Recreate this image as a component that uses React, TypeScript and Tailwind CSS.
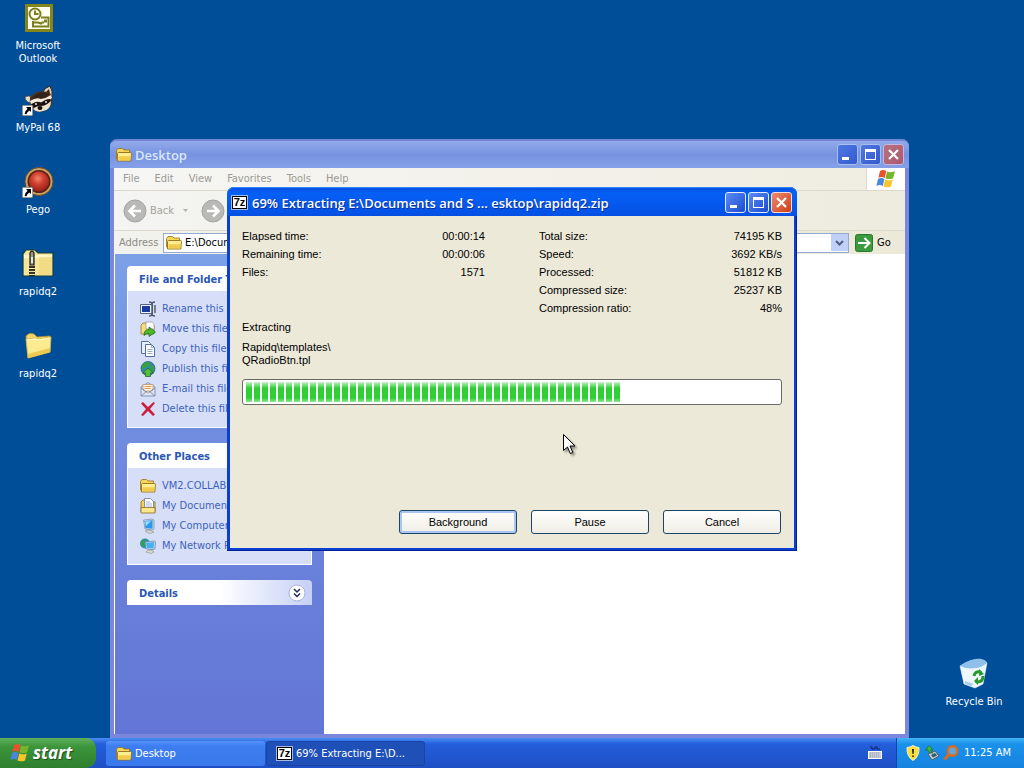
import React from 'react';
import clsx from 'clsx';

const PROGRESS_BLOCKS = 47;

const MENUS = ['File', 'Edit', 'View', 'Favorites', 'Tools', 'Help'];

interface IconProps {
  className?: string;
}

/* ---------- Icons ---------- */

const FolderIcon: React.FC<IconProps> = ({ className = 'w-4 h-4' }) => (
  <svg viewBox="0 0 16 16" className={clsx('shrink-0', className)} aria-hidden="true">
    <path d="M.5 12V3.500L2 1.500h4.500L8 3h5.500v3H3.500L1.600 13Z" fill="#f6d659" stroke="#94701a" strokeWidth=".8" />
    <path d="M1.500 14V6.500q0-1 1-1h12q1 0 1 1l-.7 7.500Z" fill="#fdee90" stroke="#94701a" strokeWidth=".9" />
    <path d="M2.500 13.200h11.500l.5-4H2.500Z" fill="#f3cb4a" />
  </svg>
);

const SevenZipIcon: React.FC = () => (
  <span
    className="flex h-[13px] w-[15px] shrink-0 items-center justify-center border border-black bg-white font-['Liberation_Sans'] text-[11px] leading-none font-bold text-black outline-1 outline-white/60"
    aria-hidden="true"
  >
    7z
  </span>
);

const WindowsFlag: React.FC<IconProps> = ({ className }) => (
  <svg viewBox="0 0 20 18" className={clsx('shrink-0', className)} aria-hidden="true">
    <path d="M4 1q3-2 6.300 0L8.700 8q-3-2-6.300-.2Z" fill="#e8532c" />
    <path d="M11 1.600q3 1.600 8-.4l-1.900 7q-3.500 1.700-7.700.2Z" fill="#79b52c" />
    <path d="M2 9q3-1.900 6.400 0L6.800 16q-3-1.900-6.400-.1Z" fill="#4a86e0" />
    <path d="M9.200 9.600q3.500 1.600 7.600-.2L15 16.400q-3.500 1.700-7.500.2Z" fill="#f7c52d" />
  </svg>
);

const ShortcutArrow: React.FC = () => (
  <svg viewBox="0 0 11 11" className="absolute bottom-0 left-0 h-[11px] w-[11px]" aria-hidden="true">
    <path d="M0 0h11v11H0Z" fill="#fff" stroke="#333" />
    <path d="M4 2h5v5L7.400 5.500Q5 7 4.500 9.200L2.600 9Q2.600 6 5.600 3.700Z" fill="#000" />
  </svg>
);

const OutlookIcon: React.FC = () => (
  <svg viewBox="0 0 32 32" className="h-8 w-8" aria-hidden="true">
    <path d="M3 2h28v28H3Z" fill="#85861a" />
    <path d="M6 5h22v22H6Z" fill="#fffef0" />
    <g fill="none" stroke="#7c7d1c" strokeWidth="2">
      <circle cx="13" cy="12" r="5.500" />
      <path d="M13 8.500V12h3.500M19 15.500h7.500v9H11V19M12 20.500h4l3 1 1-1h2" />
    </g>
    <path d="M22 17.500h3v3h-3Z" fill="#7c7d1c" />
  </svg>
);

const RaccoonIcon: React.FC = () => (
  <svg viewBox="0 0 32 32" className="h-8 w-8" aria-hidden="true">
    <path d="M21 8q1-4 7-6 3 5 2 11Z" fill="#e3d3b8" stroke="#2a1c14" strokeWidth="1" />
    <path d="m24 8 3-3 1 5Z" fill="#30221a" />
    <path d="M3 13q3-2 8 0l-2 6q-6-1-6-6Z" fill="#e9dfcd" stroke="#54463b" strokeWidth=".8" />
    <path d="M8 13Q16 4 28 9q4 6 2 12-6 8-14 7Q6 24 8 13Z" fill="#4b3327" />
    <path d="M10 14Q18 5 28 10q-5 4-10 5-4 3-8 2Z" fill="#33221a" />
    <path d="M8 17q6-4 11-2 6-1 10-4l1 3q-5 4-9 4-6 0-12 2Z" fill="#f4ead7" />
    <path d="M10 20q5-4 9-1 4-4 9-4 1 3-4 6-3 2-6 0-4 3-8 2Z" fill="#1a1310" />
    <path d="M29 17q0 9-8 10-6 2-10-2 3-3 8-3 5 0 10-5Z" fill="#eee3ce" />
    <ellipse cx="18" cy="24" rx="2.500" ry="2" fill="#120e0d" />
    <circle cx="14" cy="20" r=".9" fill="#fff" />
    <circle cx="24" cy="18" r=".9" fill="#fff" />
  </svg>
);

const PegoIcon: React.FC = () => (
  <svg viewBox="0 0 32 32" className="h-8 w-8" aria-hidden="true">
    <defs>
      <radialGradient id="pego-ball" cx=".45" cy=".35" r=".65">
        <stop offset="0" stopColor="#f58468" />
        <stop offset=".45" stopColor="#d04030" />
        <stop offset="1" stopColor="#98201a" />
      </radialGradient>
    </defs>
    <circle cx="17" cy="15.500" r="14" fill="#c8a266" stroke="#6b4a22" />
    <circle cx="17" cy="15.500" r="11.500" fill="#5c2014" />
    <circle cx="17" cy="15.500" r="10" fill="url(#pego-ball)" />
  </svg>
);

const ZipFolderIcon: React.FC = () => (
  <svg viewBox="0 0 32 32" className="h-8 w-8" aria-hidden="true">
    <path d="M1 28V6l3-4h9l3 3h15v23Z" fill="#f6e69c" stroke="#123c3a" strokeWidth="1.200" />
    <path d="M2 7h28v3H2Z" fill="#fff7c6" />
    <path d="M17 9h13v18H17Z" fill="#efd67c" opacity=".7" />
    <path d="M8 5q2-4 4 0v12H8Z" fill="#9d9c8c" stroke="#171717" strokeWidth="1.200" />
    <path d="M10 9v6" stroke="#fff" strokeWidth="1.500" />
    <path d="M8 18v10M12 18v10M10 18v10" stroke="#161616" strokeWidth="1.700" strokeDasharray="2 1" />
  </svg>
);

const BigFolderIcon: React.FC = () => (
  <svg viewBox="0 0 32 32" className="h-8 w-8" aria-hidden="true">
    <path d="M4 6q3-4 8-2l3 3 13-1v16L6 28Z" fill="#f3d468" stroke="#b18c29" strokeWidth=".8" />
    <path d="m4 9 9-1 3 1 13-2-1 15-22 6Z" fill="#fceb90" stroke="#d6b449" strokeWidth=".8" />
    <path d="m6 24 22-6v4L6 28Z" fill="#ecc950" />
    <path d="m5 10 8-1 3 1 12-2" fill="none" stroke="#fffbd2" strokeWidth="1.200" />
  </svg>
);

const RecycleBinIcon: React.FC = () => (
  <svg viewBox="0 0 32 32" className="h-8 w-8" aria-hidden="true">
    <path d="M2 8Q12 1 22 1q6 1 7 4l-4 21-8 4-11-4Z" fill="#dcebf5" stroke="#86b6de" strokeWidth=".8" />
    <path d="M2 8Q12 1 22 1q6 1 7 4-5 5-13 5Q8 11 2 8Z" fill="#8fc0ec" />
    <path d="M2 8q8 4 14 3 8-1 13-6l-4 21-8 4-11-4Z" fill="#f4f9ff" opacity=".8" />
    <path d="m7 23 9 3-3 2-6-2Z" fill="#abd0ed" />
    <path d="M16 18q1-5 6-4l1 1M25 18q0 6-6 6l-1-1" fill="none" stroke="#27992b" strokeWidth="3" />
    <path d="m21 11 5 5-5 2ZM20 19v8l-4-4Z" fill="#27992b" />
  </svg>
);

const TaskIcon: React.FC<{ kind: string }> = ({ kind }) => {
  if (kind === 'folder') return <FolderIcon />;
  return (
    <svg viewBox="0 0 16 16" className="h-4 w-4 shrink-0" aria-hidden="true">
      {kind === 'rename' && (
        <>
          <path d="M.5 3.500h12v9H.5Z" fill="#f2f5ff" stroke="#51608d" />
          <path d="M2 5h8v6H2Z" fill="#183c9e" />
          <path d="M9 1q3 0 3 2v10q0 2-3 2M15 1q-3 0-3 2M15 15q-3 0-3-2M15 4v8" fill="none" stroke="#4d536b" strokeWidth="1.400" />
        </>
      )}
      {kind === 'move' && (
        <>
          <path d="M1 13V4l2-2h4l1 2h6v9Z" fill="#f7dc7a" stroke="#93793a" strokeWidth=".8" />
          <path d="M6 1h6l2 2v5H6Z" fill="#fff" stroke="#888" strokeWidth=".6" />
          <path d="M4 14.500q0-6 5-6V6l6.500 5L9 15.500v-3q-3 0-5 2Z" fill="#4fb82b" stroke="#206c1c" strokeWidth=".8" />
        </>
      )}
      {kind === 'copy' && (
        <>
          <path d="M1.500.5h7l2 2v10h-9Z" fill="#e7eefc" stroke="#53709c" />
          <path d="M5.500 3.500h6l3 3v9h-9Z" fill="#fff" stroke="#53709c" />
          <path d="M11.500 3.500v3h3M7.500 8.500h5M7.500 10.500h5M7.500 12.500h5" fill="none" stroke="#7795bc" strokeWidth=".8" />
        </>
      )}
      {kind === 'publish' && (
        <>
          <circle cx="8" cy="7.500" r="7" fill="#3285c7" stroke="#20547b" strokeWidth=".7" />
          <path d="M2 4q3-4 7-3l2 2-3 3-4 1-2 3ZM11 4l3 1 .5 4-3 2-2-3Z" fill="#36a044" />
          <path d="m8 7 5.500 5h-3v3.500h-5V12h-3Z" fill="#57bd38" stroke="#1e6926" strokeWidth=".8" />
        </>
      )}
      {kind === 'email' && (
        <>
          <path d="m1 6 7-4.500L15 6v9H1Z" fill="#dbe5f5" stroke="#7283a1" strokeWidth=".8" />
          <path d="M3 3.500h10V9l-5 3-5-3Z" fill="#fff4df" stroke="#b28a60" strokeWidth=".7" />
          <path d="M4.500 5.500h7M4.500 7.500h6" stroke="#e39a4f" />
          <path d="m1 15 6-5h2l6 5M1 7l6 4M15 7l-6 4" fill="none" stroke="#7283a1" strokeWidth=".8" />
        </>
      )}
      {kind === 'delete' && (
        <path d="M1 2.500 3 1l5 5 5.500-5 1.500 1L10 8l5 5.500-2 1.500-5-5-5 5-2-1 5-6Z" fill="#c91f3c" />
      )}
      {kind === 'documents' && (
        <>
          <path d="M1 14V4l2-2h3l9 2v10Z" fill="#f5cf58" stroke="#8b6925" strokeWidth=".8" />
          <path d="M4.500.5h6l3 3V11h-9Z" fill="#fff" stroke="#6a7c9f" strokeWidth=".8" />
          <path d="M6 4h4M6 6h6M6 8h6" stroke="#88a3cf" strokeWidth=".8" />
          <path d="M1 15V9.500h14V15Z" fill="#fae78c" stroke="#8b6925" strokeWidth=".8" />
        </>
      )}
      {kind === 'computer' && (
        <>
          <path d="M3.500 2 12 1l2 1v9l-2 1-7-1Z" fill="#c5d5e6" stroke="#798da8" strokeWidth=".7" />
          <path d="m4.500 3 8-.8v8.500L5.500 10Z" fill="#2999ed" />
          <path d="m5 3.500 6-.5-5 5Z" fill="#9bddff" />
          <path d="m7 12 4 .5 3 1.500-4 1.500-5-2Z" fill="#dcd9cf" stroke="#85898e" strokeWidth=".6" />
        </>
      )}
      {kind === 'network' && (
        <>
          <circle cx="5" cy="5.500" r="5" fill="#2c90b7" />
          <path d="M1 4q2-3 5-3L4 5l2 3-3 1Z" fill="#35a045" />
          <path d="m5 4 9-1 1.500.8-.5 7-2 1-7-1Z" fill="#c5d5e6" stroke="#63819f" strokeWidth=".7" />
          <path d="m6 5 8-1-.5 6.500-6.500-.5Z" fill="#41b1ef" />
          <path d="m8 12 4 .4 2 1.600-3 1.500-5-1.500Z" fill="#dcd9cf" stroke="#85898e" strokeWidth=".6" />
        </>
      )}
    </svg>
  );
};

/* ---------- Window parts ---------- */

const CaptionButtons: React.FC<{ active?: boolean }> = ({ active = false }) => {
  const blue = active
    ? 'bg-linear-to-br from-[#5b8df5] to-[#1c48cf] border-[#e6edfc]'
    : 'bg-linear-to-br from-[#4f78e2] to-[#3459cf] border-[#a9bff0]';
  const red = active
    ? 'bg-linear-to-br from-[#ee8a6c] to-[#cc3a14] border-[#f6dcd6]'
    : 'bg-linear-to-br from-[#b9727f] to-[#a95a6c] border-[#c9b5df]';
  const base = 'flex h-[21px] w-[21px] items-center justify-center rounded-[3px] border';

  return (
    <div className="flex gap-[2px]">
      <button type="button" aria-label="Minimize" className={clsx(base, blue)}>
        <svg viewBox="0 0 19 19" className="h-[19px] w-[19px]">
          <path d="M4 12h7v3H4Z" fill="#fff" />
        </svg>
      </button>
      <button type="button" aria-label="Maximize" className={clsx(base, blue)}>
        <svg viewBox="0 0 19 19" className="h-[19px] w-[19px]">
          <path d="M4 4h11v11H4Zm1 3v7h9V7Z" fill="#fff" fillRule="evenodd" />
        </svg>
      </button>
      <button type="button" aria-label="Close" className={clsx(base, red)}>
        <svg viewBox="0 0 19 19" className="h-[19px] w-[19px]">
          <path d="m5 5 9 9m0-9-9 9" stroke="#fff" strokeWidth="2.200" />
        </svg>
      </button>
    </div>
  );
};

const DesktopIcon: React.FC<{ label: string; shortcut?: boolean; children: React.ReactNode }> = ({
  label,
  shortcut = false,
  children
}) => (
  <button type="button" className="flex h-[82px] w-[76px] flex-col items-center gap-[5px] pt-[2px]">
    <span className="relative h-8 w-8 shrink-0">
      {children}
      {shortcut && <ShortcutArrow />}
    </span>
    <span className="w-[62px] text-center leading-[13px] text-white">{label}</span>
  </button>
);

interface TaskPanelProps {
  title: string;
  items: { kind: string; label: string }[];
}

const TaskPanel: React.FC<TaskPanelProps> = ({ title, items }) => (
  <section>
    <h2 className="flex h-[25px] items-center rounded-t-[4px] bg-linear-to-r from-white from-50% to-[#c9d3f7] px-3 pt-[3px] font-bold text-[#2a57b4]">
      {title}
    </h2>
    <ul className="border border-t-0 border-white bg-[#d7dff8] pt-2 pb-2 pl-3">
      {items.map(item => (
        <li key={item.label}>
          <a href="#" className="flex h-5 items-center gap-[6px] whitespace-nowrap text-[#3c62bd]">
            <TaskIcon kind={item.kind} />
            {item.label}
          </a>
        </li>
      ))}
    </ul>
  </section>
);

const NavCircle: React.FC<{ flip?: boolean }> = ({ flip = false }) => (
  <svg viewBox="0 0 24 24" className={clsx('h-6 w-6', flip && 'rotate-180')} aria-hidden="true">
    <circle cx="12" cy="12" r="11" fill="#b9b9b6" stroke="#a4a4a0" />
    <path d="M18 12H7m5-5.500L6.500 12l5.500 5.500" fill="none" stroke="#fff" strokeWidth="2.600" />
  </svg>
);

const ExplorerWindow: React.FC = () => (
  <section className="absolute top-[139px] right-[115px] bottom-0 left-[110px] flex flex-col rounded-t-[8px] bg-[#7b87dc] px-1 pb-1">
    <header className="-mx-1 flex h-[29px] items-center gap-[3px] rounded-t-[7px] border-t-2 border-[#7384d6] bg-linear-to-b from-[#93aaeb] via-[#7793e0] to-[#83a0e8] pr-[5px] pl-[6px]">
      <FolderIcon />
      <h1 className="flex-1 font-['Open_Sans',sans-serif] text-[13px] leading-5 font-semibold text-[#dbe6fb]">
        Desktop
      </h1>
      <CaptionButtons />
    </header>

    <div className="flex h-[23px] border-b border-[#dcd9cc] bg-linear-to-r from-[#f6f6f4] to-[#efece0] text-[#9b9a93]">
      <nav className="flex flex-1 items-center gap-[15px] pl-[9px]">
        {MENUS.map(menu => (
          <button key={menu} type="button">
            {menu}
          </button>
        ))}
      </nav>
      <div className="flex w-[39px] items-center justify-center border-l border-[#dcd9cc] bg-white">
        <WindowsFlag className="h-[18px] w-5" />
      </div>
    </div>

    <div className="flex h-10 items-center border-b border-[#dcd9cc] bg-linear-to-r from-[#f4f4f2] to-[#eeebdf] pl-[9px] text-[#a3a29c]">
      <button type="button" className="flex items-center gap-[3px]">
        <NavCircle />
        Back
      </button>
      <svg viewBox="0 0 5 3" className="mr-[13px] ml-[9px] h-[3px] w-[5px]" aria-hidden="true">
        <path d="M0 0h5L2.500 3Z" fill="#b3b2ab" />
      </svg>
      <button type="button" aria-label="Forward">
        <NavCircle flip />
      </button>
    </div>

    <div className="flex h-[23px] items-center bg-linear-to-r from-[#f2f2ee] to-[#ece9d8] pl-[5px]">
      <label htmlFor="address" className="w-[44px] text-[#8b8a84]">
        Address
      </label>
      <div className="flex h-5 flex-1 items-center border border-[#95aad0] bg-white pl-[2px]">
        <FolderIcon />
        <input
          id="address"
          className="min-w-0 flex-1 pl-[3px] text-black outline-none"
          defaultValue="E:\Documents and Settings\Desktop"
        />
        <button
          type="button"
          aria-label="Address history"
          className="flex h-[17px] w-[17px] items-center justify-center bg-[#c1d0f8]"
        >
          <svg viewBox="0 0 9 6" className="h-[6px] w-[9px]">
            <path d="m1 1 3.500 3.500L8 1" fill="none" stroke="#4d6185" strokeWidth="2" />
          </svg>
        </button>
      </div>
      <button type="button" className="flex w-[56px] items-center gap-1 pl-[6px]">
        <svg viewBox="0 0 18 18" className="h-[18px] w-[18px]" aria-hidden="true">
          <rect x=".5" y=".5" width="17" height="17" rx="2" fill="#3b9a3f" stroke="#267a2b" />
          <path d="M3 9h11M9.500 4l5 5-5 5" fill="none" stroke="#fff" strokeWidth="2" />
        </svg>
        Go
      </button>
    </div>

    <div className="flex flex-1 border-l border-white bg-white">
      <aside className="flex w-[209px] flex-col gap-[15px] bg-linear-to-b from-[#7ba0e8] via-[#6c86dc] to-[#6375d6] px-3 pt-3">
        <TaskPanel
          title="File and Folder T"
          items={[
            { kind: 'rename', label: 'Rename this file' },
            { kind: 'move', label: 'Move this file' },
            { kind: 'copy', label: 'Copy this file' },
            { kind: 'publish', label: 'Publish this file' },
            { kind: 'email', label: 'E-mail this file' },
            { kind: 'delete', label: 'Delete this file' }
          ]}
        />
        <TaskPanel
          title="Other Places"
          items={[
            { kind: 'folder', label: 'VM2.COLLABL' },
            { kind: 'documents', label: 'My Documents' },
            { kind: 'computer', label: 'My Computer' },
            { kind: 'network', label: 'My Network Places' }
          ]}
        />
        <section>
          <button
            type="button"
            className="flex h-[25px] w-full items-center justify-between rounded-t-[4px] bg-linear-to-r from-white from-50% to-[#c6d0f6] pr-[6px] pl-3 font-bold text-[#2a57b4]"
          >
            <span className="pt-[3px]">Details</span>
            <svg viewBox="0 0 18 18" className="h-[18px] w-[18px]" aria-hidden="true">
              <circle cx="9" cy="9" r="8" fill="#fff" stroke="#a9b5da" />
              <path d="m6 5 3 3 3-3M6 9.500l3 3 3-3" fill="none" stroke="#1e2c58" strokeWidth="1.500" />
            </svg>
          </button>
        </section>
      </aside>
    </div>
  </section>
);

const Stat: React.FC<{ label: string; value: string }> = ({ label, value }) => (
  <div className="flex h-[18px] items-center justify-between">
    <dt>{label}</dt>
    <dd>{value}</dd>
  </div>
);

const DialogButton: React.FC<{ label: string; primary?: boolean }> = ({ label, primary = false }) => (
  <button
    type="button"
    className={clsx(
      'h-6 w-[118px] rounded-[3px] border border-[#1c4468] bg-linear-to-b from-white to-[#efede4]',
      primary && 'inset-ring-2 inset-ring-[#a9c6f3]'
    )}
  >
    {label}
  </button>
);

const ExtractDialog: React.FC = () => (
  <section
    role="dialog"
    aria-labelledby="extract-title"
    className="absolute top-[187px] right-[227px] left-[227px] flex flex-col rounded-t-[8px] bg-[#0b3fd0] px-[3px] pb-[3px] shadow-[inset_-1px_-1px_0_#001f9c]"
  >
    <header className="-mx-[3px] flex h-[29px] items-center gap-[5px] rounded-t-[7px] bg-linear-to-b from-[#0a4bd8] from-0% via-[#0560f6] via-20% to-[#0550e4] pt-[2px] pr-[5px] pl-[5px] shadow-[inset_0_1px_0_#2f86ff]">
      <SevenZipIcon />
      <h1
        id="extract-title"
        className="flex-1 font-['Open_Sans',sans-serif] text-[13px] leading-5 font-semibold whitespace-nowrap text-white text-shadow-[1px_1px_0_#0a2f9a]"
      >
        69% Extracting E:\Documents and S ... esktop\rapidq2.zip
      </h1>
      <CaptionButtons active />
    </header>

    <div className="bg-[#ece9d8] px-3 pt-[11px] pb-[14px] font-['Liberation_Sans',sans-serif] text-black">
      <div className="grid grid-cols-2 gap-[54px]">
        <dl>
          <Stat label="Elapsed time:" value="00:00:14" />
          <Stat label="Remaining time:" value="00:00:06" />
          <Stat label="Files:" value="1571" />
        </dl>
        <dl>
          <Stat label="Total size:" value="74195 KB" />
          <Stat label="Speed:" value="3692 KB/s" />
          <Stat label="Processed:" value="51812 KB" />
          <Stat label="Compressed size:" value="25237 KB" />
          <Stat label="Compression ratio:" value="48%" />
        </dl>
      </div>
      <p className="mt-[3px]">Extracting</p>
      <p className="mt-[7px] leading-[13px]">
        Rapidq\templates\
        <br />
        QRadioBtn.tpl
      </p>
      <div
        role="progressbar"
        aria-valuenow={69}
        aria-label="Extraction progress"
        className="mt-3 flex h-[26px] gap-[2px] rounded-[3px] border border-[#6b6b66] bg-white px-[3px] py-[2px]"
      >
        {Array.from({ length: PROGRESS_BLOCKS }, (_, i) => (
          <span
            key={i}
            className="w-[6px] bg-[linear-gradient(to_bottom,#c4f3c4,#2fd036_30%,#2fd036_80%,#8fe592)]"
          />
        ))}
      </div>
      <div className="mt-[105px] flex justify-end gap-[14px] pr-px">
        <DialogButton label="Background" primary />
        <DialogButton label="Pause" />
        <DialogButton label="Cancel" />
      </div>
    </div>
  </section>
);

const Taskbar: React.FC = () => (
  <footer className="flex h-[30px] shrink-0 items-stretch bg-linear-to-b from-[#4a8cf4] from-0% via-[#245edb] via-20% to-[#1e4fc4] text-white">
    <button
      type="button"
      className="flex w-24 items-center gap-[3px] rounded-r-[10px] bg-linear-to-b from-[#5fb05c] via-[#3b943a] via-30% to-[#2f7f2f] pl-[10px] font-['Open_Sans',sans-serif] text-[17px] font-bold italic text-shadow-[1px_1px_1px_#1d4f1d]"
    >
      <WindowsFlag className="h-[18px] w-5" />
      start
    </button>
    <div className="ml-[10px] flex flex-1 gap-px pt-[3px] pb-[2px]">
      <button
        type="button"
        className="flex w-[159px] items-center gap-[3px] rounded-[3px] bg-linear-to-b from-[#5793f8] via-[#3c7df0] via-20% to-[#3a79ec] pl-[10px]"
      >
        <FolderIcon />
        Desktop
      </button>
      <button
        type="button"
        className="flex w-[159px] items-center gap-1 rounded-[3px] border border-[#1a44a4] bg-[#1e50b8] pl-[10px]"
      >
        <SevenZipIcon />
        69% Extracting E:\D...
      </button>
    </div>
    <button type="button" aria-label="Language bar" className="mr-[14px]">
      <svg viewBox="0 0 14 14" className="h-[14px] w-[14px]" aria-hidden="true">
        <path d="M2 1h2v2h3V1h2v2h3" fill="none" stroke="#10246a" />
        <path d="M0 5h14v8H0Z" fill="#fff" />
        <path d="M1.500 7h11M1.500 9h11M1.500 11h11" stroke="#1b2a5c" strokeDasharray="1.200 .8" />
      </svg>
    </button>
    <div className="flex w-32 items-center gap-[3px] border-l border-[#1042af] bg-linear-to-b from-[#3fb4f5] via-[#1a91ea] via-20% to-[#1583e0] pl-2">
      <svg viewBox="0 0 16 16" className="h-4 w-4" aria-hidden="true">
        <path d="M8 .5q3 2 6 2 .5 9-6 13Q1.500 11.500 2 2.500q3 0 6-2Z" fill="#fadf3c" stroke="#f5f0cf" />
        <path d="M7 4h2l-.4 5H7.400ZM7.200 10.500h1.600V12H7.200Z" fill="#222" />
      </svg>
      <svg viewBox="0 0 16 16" className="h-4 w-4" aria-hidden="true">
        <path d="m4 9 7-3 4 5-7 4Z" fill="#c3cbd0" stroke="#3e5261" strokeWidth=".8" />
        <path d="m7 10 4-2 2 2.500-4 2Z" fill="#38586e" />
        <path d="M9 8Q4 8 4 5H1.500L5 .5 9 5H6.500q0 1.500 2.500 3Z" fill="#41b538" stroke="#1a6f24" strokeWidth=".7" />
      </svg>
      <svg viewBox="0 0 16 16" className="h-4 w-4" aria-hidden="true">
        <circle cx="9.500" cy="6" r="4.800" fill="#62a6d8" stroke="#dd6a1c" strokeWidth="2.400" />
        <path d="m6 9.500-4.500 5" stroke="#dd6a1c" strokeWidth="3" />
      </svg>
      <time className="ml-[2px] whitespace-nowrap">11:25 AM</time>
    </div>
  </footer>
);

export default function App() {
  return (
    <div className="flex h-screen flex-col overflow-hidden bg-[#004e98] font-['DejaVu_Sans_Condensed','DejaVu_Sans',sans-serif] text-[11px] leading-[14px] select-none">
      <main className="relative flex-1">
        <div className="flex flex-col">
          <DesktopIcon label="Microsoft Outlook">
            <OutlookIcon />
          </DesktopIcon>
          <DesktopIcon label="MyPal 68" shortcut>
            <RaccoonIcon />
          </DesktopIcon>
          <DesktopIcon label="Pego" shortcut>
            <PegoIcon />
          </DesktopIcon>
          <DesktopIcon label="rapidq2">
            <ZipFolderIcon />
          </DesktopIcon>
          <DesktopIcon label="rapidq2">
            <BigFolderIcon />
          </DesktopIcon>
        </div>
        <div className="absolute right-3 bottom-0">
          <DesktopIcon label="Recycle Bin">
            <RecycleBinIcon />
          </DesktopIcon>
        </div>

        <ExplorerWindow />
        <ExtractDialog />

        <svg
          viewBox="0 0 14 22"
          className="pointer-events-none absolute top-[434px] left-[563px] h-[22px] w-[14px] drop-shadow-[2px_2px_1px_rgba(0,0,0,0.4)]"
          aria-hidden="true"
        >
          <path d="M.5.5v16l4-3.500 2.700 6.500 2.600-1L7 12h5Z" fill="#fff" stroke="#000" />
        </svg>
      </main>
      <Taskbar />
    </div>
  );
}
